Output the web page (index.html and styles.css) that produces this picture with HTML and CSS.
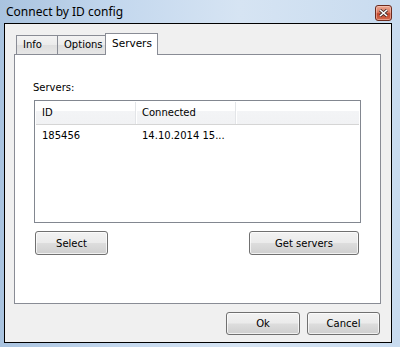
FILE: index.html
```html
<!DOCTYPE html>
<html lang="en">
    <head>
        <meta charset="UTF-8">
        <title>Connect by ID config</title>
        <link rel="stylesheet" href="styles.css">
    </head>

    <body>
        <div class="window">
            <div class="titlebar">
                <span class="title">Connect by ID config</span>
                <button class="close-button" title="Close">
                    <svg width="9" height="8" viewBox="0 0 9 8">
                        <path d="M1 1 L8 7 M8 1 L1 7" stroke="#3a2a2a" stroke-width="3"/>
                        <path d="M1 1 L8 7 M8 1 L1 7" stroke="#fff" stroke-width="1.6"/>
                    </svg>
                </button>
            </div>

            <div class="client">
                <div class="tabs">
                    <div class="tab">Info</div>
                    <div class="tab">Options</div>
                    <div class="tab active">Servers</div>
                </div>

                <div class="panel">
                    <div class="group-label">Servers:</div>
                    <div class="listview">
                        <div class="list-header">
                            <div class="col col-id">ID</div>
                            <div class="col col-conn">Connected</div>
                            <div class="col col-rest"></div>
                        </div>
                        <div class="list-row">
                            <div class="cell col-id">185456</div>
                            <div class="cell col-conn">14.10.2014 15...</div>
                        </div>
                    </div>
                    <div class="panel-buttons">
                        <button class="btn btn-select">Select</button>
                        <button class="btn btn-get">Get servers</button>
                    </div>
                </div>

                <div class="footer">
                    <button class="btn btn-ok">Ok</button>
                    <button class="btn btn-cancel">Cancel</button>
                </div>
            </div>
        </div>
    </body>
</html>
```

FILE: styles.css
```css
* {
    box-sizing: border-box;
    margin: 0;
    padding: 0;
}
body {
    width: 400px;
    height: 347px;
    overflow: hidden;
    font-family: "DejaVu Sans", Tahoma, sans-serif;
    font-size: 10px;
    color: #000;
}
.window {
    width: 400px;
    height: 347px;
    display: flex;
    flex-direction: column;
    padding: 0 8px 4px 4px;
    background: linear-gradient(90deg, #a9c3df 0%, #c4d8ee 30%, #d6e4f3 60%, #c8dbef 100%);
}
.titlebar {
    height: 23px;
    display: flex;
    align-items: center;
    justify-content: space-between;
    margin-left: -4px;
    padding-left: 6px;
}
.title {
    font-family: "Noto Sans", "Open Sans", sans-serif;
    font-size: 12px;
    color: #000;
    padding-bottom: 1px;
}
.close-button {
    width: 17px;
    height: 16px;
    margin-top: 3px;
    border: 1px solid #6b2a1d;
    border-radius: 3px;
    background: linear-gradient(#eaa892 0%, #dc7a62 45%, #c2452b 55%, #d46a4e 100%);
    display: flex;
    align-items: center;
    justify-content: center;
    box-shadow: inset 0 0 0 1px rgba(255, 220, 210, 0.45);
}
.client {
    flex: 1;
    border: 1px solid #000;
    background-color: #f0f0f0;
    padding: 9px 10px 7px 9px;
    display: flex;
    flex-direction: column;
}
.tabs {
    height: 22px;
    display: flex;
    align-items: flex-end;
    padding-left: 2px;
    margin-bottom: -1px;
    position: relative;
    z-index: 1;
}
.tab {
    height: 19px;
    padding: 3px 6px 0 6px;
    border: 1px solid #898c95;
    border-bottom: none;
    margin-bottom: 1px;
    background: linear-gradient(#f3f3f3 0%, #ebebeb 50%, #dedede 51%, #e6e6e6 100%);
    font-size: 10px;
}
.tab + .tab {
    margin-left: -1px;
}
.tab:nth-child(1) {
    width: 42px;
}
.tab:nth-child(2) {
    width: 49px;
}
.tab.active {
    width: 53px;
    height: 22px;
    margin-bottom: 0;
    padding-top: 3px;
    background: #fff;
    font-size: 10.5px;
}
.panel {
    height: 250px;
    border: 1px solid #898c95;
    background-color: #fff;
    padding: 27px 19px 0 19px;
    display: flex;
    flex-direction: column;
}
.group-label {
    height: 18px;
    margin-left: -1px;
}
.listview {
    height: 123px;
    border: 1px solid #828790;
    background-color: #fff;
}
.list-header {
    height: 23px;
    margin: 1px 1px 0 1px;
    display: flex;
    border-bottom: 1px solid #d5d5d5;
    background: linear-gradient(#fff 0%, #fff 40%, #f3f4f6 41%, #f1f2f4 100%);
}
.col {
    padding: 5px 7px 0 6px;
    border-right: 1px solid #e3e5e8;
    box-shadow: 1px 0 0 #fff;
}
.col-id {
    width: 100px;
}
.col-conn {
    width: 100px;
}
.col-rest {
    flex: 1;
    border-right: none;
    box-shadow: none;
}
.list-row {
    display: flex;
    height: 18px;
    margin: 2px 1px 0 1px;
}
.cell {
    padding: 3px 0 0 6px;
    white-space: nowrap;
}
.panel-buttons {
    display: flex;
    justify-content: space-between;
    margin-top: 8px;
    padding-left: 1px;
}
.btn {
    height: 24px;
    border: 1px solid #707070;
    border-radius: 3px;
    font-family: "DejaVu Sans", Tahoma, sans-serif;
    font-size: 10px;
    color: #000;
    background: linear-gradient(#f2f2f2 0%, #ebebeb 48%, #dddddd 52%, #cfcfcf 100%);
    box-shadow: inset 0 0 0 1px rgba(255, 255, 255, 0.7);
    cursor: pointer;
}
.btn-select {
    width: 73px;
}
.btn-get {
    width: 110px;
    margin-right: 2px;
}
.footer {
    display: flex;
    justify-content: flex-end;
    gap: 7px;
    margin-top: 8px;
    padding-right: 1px;
}
.btn-ok {
    width: 74px;
    height: 23px;
}
.btn-cancel {
    width: 73px;
    height: 23px;
}
```
